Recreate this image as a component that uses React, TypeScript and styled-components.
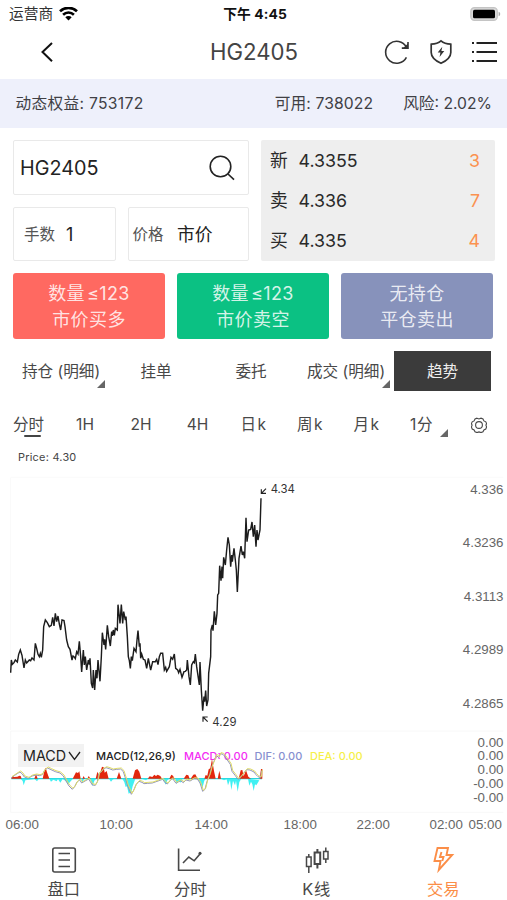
import React from "react";
import styled, { createGlobalStyle } from "styled-components";

const GlobalStyle = createGlobalStyle`
  * { box-sizing: border-box; }
  body { margin: 0; background: #fff; }
`;

const Screen = styled.div`
  width: 507px;
  height: 900px;
  overflow: hidden;
  display: flex;
  flex-direction: column;
  background: #fff;
  color: #444;
  font-family: Inter, "Noto Sans CJK SC", sans-serif;
  font-size: 15px;
  line-height: 24px;
  white-space: nowrap;

  > * { flex-shrink: 0; }
`;

const StatusBar = styled.div`
  height: 27px;
  display: grid;
  grid-template-columns: 1fr auto 1fr;
  align-items: center;
  padding: 0 6px 0 9px;
  color: #111;
`;
const Carrier = styled.div`
  display: flex;
  align-items: center;
  gap: 6px;
  font-size: 14.7px;
  color: #333;
`;
const Clock = styled.div`
  font-size: 13.8px;
  font-weight: 700;
  letter-spacing: 0.1px;
`;
const BatterySlot = styled.div`
  justify-self: end;
  display: flex;
`;

const NavBar = styled.header`
  height: 52px;
  display: grid;
  grid-template-columns: 132px 1fr 132px;
  align-items: center;
  padding-bottom: 2px;
`;
const BackSlot = styled.div`
  padding-left: 38px;
  display: flex;
`;
const Title = styled.h1`
  margin: 0;
  padding-left: 1px;
  font-size: 22.2px;
  font-weight: 400;
  text-align: center;
  color: #444;
`;
const NavActions = styled.div`
  display: flex;
  align-items: center;
  gap: 18.5px;
  padding-left: 9px;
`;

const AccountBar = styled.div`
  height: 49px;
  display: flex;
  align-items: center;
  padding: 1px 15px 0 15.5px;
  background: #eef0fb;
  color: #404045;
  font-size: 15.7px;
`;
const Stat = styled.span<{ $push?: boolean; $gap?: number; $track?: number }>`
  margin-left: ${(p) => (p.$push ? "auto" : `${p.$gap ?? 0}px`)};
  letter-spacing: ${(p) => p.$track ?? 0}px;
`;

const OrderForm = styled.section`
  display: grid;
  grid-template-columns: 103px 121px 234px;
  grid-template-rows: 55px 54px;
  gap: 12px;
  padding: 12px 12px 0 13px;
`;
const Field = styled.div<{ $wide?: boolean; $inset: number }>`
  grid-column: ${(p) => (p.$wide ? "1 / 3" : "auto")};
  display: flex;
  align-items: center;
  margin-right: ${(p) => (p.$wide ? 0.5 : 0)}px;
  padding: ${(p) => (p.$wide ? 0 : 1)}px 13px 0 ${(p) => p.$inset}px;
  border: 1px solid #e9e9e9;
  border-radius: 2px;
`;
const FieldLabel = styled.span<{ $gap: number }>`
  width: ${(p) => p.$gap}px;
  font-size: 15.5px;
  color: #555;
`;
const FieldValue = styled.span<{ $size: number }>`
  flex: 1;
  font-size: ${(p) => p.$size}px;
  color: #222;
`;
const Quotes = styled.div`
  grid-column: 3;
  grid-row: 1 / 3;
  display: grid;
  grid-template-rows: repeat(3, 40.3px);
  background: #eee;
  border-radius: 2px;
  padding: 0.5px 15px 0 9px;
`;
const QuoteRow = styled.div`
  display: grid;
  grid-template-columns: 28.5px 1fr auto;
  align-items: center;
  font-size: 17.8px;
  color: #2a2a2a;
`;
const Lots = styled.span`
  color: #fb9250;
`;

const OrderButtons = styled.div`
  display: grid;
  grid-template-columns: 152px 152px 152px;
  gap: 12px;
  padding: 12px 15px 0 13px;
`;
const OrderButton = styled.button<{ $bg: string }>`
  height: 66px;
  border: 0;
  border-radius: 3px;
  padding: 2px 0 0;
  background: ${(p) => p.$bg};
  color: rgba(255, 255, 255, 0.84);
  font: 400 18px/26px Inter, "Noto Sans CJK SC", sans-serif;
  letter-spacing: 0.4px;
  display: flex;
  flex-direction: column;
  align-items: center;
  justify-content: center;
`;
const Condition = styled.span`
  display: flex;
  gap: 2px;
`;

const Tabs = styled.nav`
  height: 40px;
  margin-top: 12px;
  display: grid;
  grid-template-columns: 117px 78px 112px 87px 97px;
  align-items: center;
  color: #484848;
  font-size: 15.6px;
`;
const Tab = styled.div<{ $active?: boolean; $start?: number }>`
  position: relative;
  height: 40px;
  display: flex;
  align-items: center;
  justify-content: ${(p) => (p.$start === undefined ? "center" : "flex-start")};
  padding-top: 2px;
  padding-left: ${(p) => p.$start ?? 0}px;
  background: ${(p) => (p.$active ? "#3b3b3b" : "transparent")};
  color: ${(p) => (p.$active ? "#eee" : "inherit")};
`;
const Corner = styled.i<{ $right: number; $bottom: number }>`
  position: absolute;
  right: ${(p) => p.$right}px;
  bottom: ${(p) => p.$bottom}px;
  border-left: 8px solid transparent;
  border-bottom: 8px solid #666;
`;

const Periods = styled.nav`
  height: 57px;
  display: grid;
  grid-template-columns: 57px 56px 56px 57px 56px 57px 56px 57px 55px;
  padding-top: 4px;
  color: #484848;
  font-size: 15.5px;
`;
const Period = styled.div<{ $active?: boolean; $shift?: number; $track?: number }>`
  position: relative;
  height: 57px;
  display: flex;
  align-items: center;
  justify-content: center;
  padding-top: 2px;
  padding-right: ${(p) => p.$shift ?? 0}px;
  letter-spacing: ${(p) => p.$track ?? 0}px;

  &::after {
    content: ${(p) => (p.$active ? '""' : "none")};
    position: absolute;
    left: 24px;
    bottom: 15px;
    width: 17px;
    height: 2.5px;
    border-radius: 2px;
    background: #444;
  }
`;

const PriceLine = styled.div`
  height: 22px;
  padding: 0 0 0 18px;
  font-size: 10.9px;
  line-height: 18px;
  letter-spacing: 0.25px;
  color: #444;
`;

const Layered = styled.section<{ $h: number }>`
  height: ${(p) => p.$h}px;
  display: grid;
  grid-template-columns: 507px;
  grid-template-rows: ${(p) => p.$h}px;
  font-family: "Liberation Sans", Arial, sans-serif;

  > * { grid-area: 1 / 1; }
`;
const PriceScale = styled.div`
  justify-self: end;
  display: flex;
  flex-direction: column;
  padding: 9.5px 3.5px 0 0;
  text-align: right;
  font-size: 13.3px;
  line-height: 20px;
  color: #666;
  gap: 33.5px;
`;
const MacdScale = styled.div`
  justify-self: end;
  padding: 5.5px 3.5px 0 0;
  text-align: right;
  font-size: 13.3px;
  line-height: 13.75px;
  color: #666;
`;
const MacdLegend = styled.div`
  align-self: start;
  display: flex;
  align-items: center;
  padding: 14px 0 0 18px;
  font: 500 11px/21px Inter, sans-serif;
`;
const Indicator = styled.div`
  width: 66px;
  height: 23px;
  margin-right: 12px;
  padding-left: 5px;
  display: flex;
  align-items: center;
  gap: 2px;
  background: #f2f2f2;
  color: #222;
  font-size: 14.3px;
  font-weight: 400;
`;
const LegendItem = styled.span<{ $color: string; $w: number }>`
  width: ${(p) => p.$w}px;
  padding-top: 2px;
  color: ${(p) => p.$color};
`;
const TimeAxis = styled.div`
  height: 24px;
  display: grid;
  grid-template-columns: 94px 95px 89px 73px 73px 39px 40px;
  padding-left: 5.5px;
  padding-bottom: 1px;
  align-items: center;
  font: 13.3px "Liberation Sans", Arial, sans-serif;
  color: #666;
`;

const BottomNav = styled.nav`
  height: 63px;
  display: grid;
  grid-template-columns: repeat(4, 126.5px);
`;
const NavItem = styled.div<{ $active?: boolean; $track?: number }>`
  display: flex;
  flex-direction: column;
  align-items: center;
  padding-top: 9px;
  padding-left: 1px;
  gap: 3px;
  font-size: 16.3px;
  line-height: 24px;
  letter-spacing: ${(p) => p.$track ?? 0}px;
  color: ${(p) => (p.$active ? "#fb8e48" : "#484848")};
`;

const PRICE_PATH =
  "32,608 34,570 37,583 42,578 46,570 52,576 56,553 61,540 66,556 72,594 76,570 80,579 88,570 92,572 96,564 102,570 106,520 110,535 114,553 118,560 121,550 124,562 128,540 131,470 136,450 142,458 148,470 154,466 158,442 162,468 166,430 170,455 174,438 178,462 182,480 186,450 192,452 195,470 200,510 205,530 210,538 216,570 219,558 222,560 226,566 230,545 234,552 238,514 242,560 245,606 250,540 253,585 256,560 260,600 265,570 268,584 270,565 274,640 278,654 280,600 284,660 288,600 291,625 294,570 300,634 304,560 307,488 312,525 314,508 317,538 322,466 326,500 331,528 335,485 337,498 340,480 343,496 346,475 352,480 354,404 360,460 364,404 368,460 371,425 376,450 378,440 382,500 385,560 388,572 391,595 394,560 397,572 402,535 408,545 411,510 414,482 418,530 420,520 422,565 425,552 430,568 435,570 440,595 445,565 448,580 452,600 458,575 466,575 470,568 474,584 478,560 482,550 488,550 491,580 493,600 497,592 500,604 508,590 513,562 518,568 523,552 527,595 533,600 536,608 540,598 546,622 552,605 556,604 560,600 562,570 567,620 571,645 575,585 580,575 583,578 586,552 590,590 598,645 600,576 604,660 608,722 612,680 614,695 617,662 620,708 624,690 626,610 632,560 633,480 637,465 639,482 643,424 647,465 651,430 653,375 656,370 659,287 663,332 666,290 668,325 671,262 676,285 680,240 684,202 688,225 692,290 695,255 697,275 702,235 706,270 709,300 712,366 717,265 723,228 727,255 730,245 734,265 738,143 741,215 746,180 752,178 756,156 760,200 764,165 768,230 771,180 774,210 780,180 783,85";

const MACD_UP = [
  "34,131 37,122 42,126 52,125 58,122 62,123 65,131",
  "103,131 108,117 113,131",
  "128,131 133,108 137,98 141,112 148,131",
  "218,131 228,112 234,114 238,109 242,131",
  "247,131 251,123 255,131 262,131 266,123 272,131",
  "287,131 292,110 297,120 301,112 306,95 311,97 314,113 320,108 326,131",
  "350,131 357,111 364,131",
  "398,131 405,106 412,102 418,110 424,131",
  "443,131 449,124 457,126 463,119 468,123 473,119 481,123 486,131",
  "508,131 514,119 519,122 524,131",
  "551,131 559,119 565,121 569,131",
  "572,131 580,119 586,118 593,131",
  "613,131 617,120 622,122 626,103 631,100 636,72 642,108 647,131",
  "653,131 658,107 663,131",
  "716,131 722,106 727,105 731,124 738,106 745,125 753,131",
  "779,131 783,102 787,102 787,131",
];
const MACD_DOWN = [
  "62,131 68,138 71,151 76,136 104,132 111,139 116,132",
  "148,131 153,140 160,134 170,139 174,132 181,143 188,132 197,138 205,147 212,139 219,131",
  "244,131 248,145 252,131 270,131 278,153 283,137 289,131",
  "327,131 333,140 339,133 348,131",
  "367,131 373,142 377,156 381,154 386,176 394,171 398,154 406,131",
  "424,131 438,136 444,131",
  "489,131 497,149 502,136 508,131",
  "526,131 530,146 536,137 541,143 548,131",
  "594,131 600,144 607,160 613,137 617,131",
  "663,131 672,136 680,133 684,151 690,135 694,165 699,137 705,151 708,137 713,170 718,141 724,131",
  "744,131 748,152 753,140 757,148 761,168 765,148 769,151 778,136",
];
const SIGNAL =
  "34,128 44,121 53,115 60,111 67,117 73,126 85,130 96,123 108,120 118,122 127,119 134,105 143,99 153,104 166,110 180,114 190,123 198,138 207,153 217,163 224,155 231,141 239,135 245,144 255,138 266,132 277,150 286,151 292,140 297,115 303,112 308,104 318,98 328,101 338,105 350,103 362,102 370,110 377,132 383,153 394,178 401,166 408,149 417,139 426,142 432,146 443,145 457,144 474,138 488,133 495,143 502,147 511,136 518,131 528,145 541,137 550,143 558,135 570,138 582,131 592,132 600,144 608,169 615,163 621,139 629,119 635,96 642,79 649,61 656,68 661,56 669,58 676,66 684,78 691,88 696,109 706,122 714,133 722,127 730,116 740,104 750,105 762,111 768,119 774,125 782,128 785,107";

const StrokeIcon = styled.svg`
  display: block;
  flex: none;
  fill: none;
  stroke: currentColor;
`;
const Plot = styled.svg`
  display: block;
`;

const PERIODS = [
  { label: "1H", track: 0 },
  { label: "2H", track: 0 },
  { label: "4H", track: 0 },
  { label: "日k", track: 1.6 },
  { label: "周k", track: 1.6 },
  { label: "月k", track: 1.6 },
];

export default function App() {
  return (
    <>
      <GlobalStyle />
      <Screen>
        <StatusBar>
          <Carrier>
            运营商
            <StrokeIcon width="19" height="14" viewBox="0 0 19 14" strokeWidth="2.6" color="#000">
              <path d="M1 4.300a12.200 12.200 0 0 1 17 0M4.100 7.700a7.700 7.700 0 0 1 10.800 0" />
              <path d="M9.500 13.400 6.300 10.200a4.600 4.600 0 0 1 6.400 0z" fill="currentColor" stroke="none" />
            </StrokeIcon>
          </Carrier>
          <Clock>下午 4:45</Clock>
          <BatterySlot>
            <svg width="31" height="14" viewBox="0 0 31 14">
              <rect x="0.8" y="0.7" width="26.5" height="12.6" rx="3.6" fill="#d8d8d8" stroke="#c4c4c4" strokeWidth="1.2" />
              <rect x="3" y="2.7" width="22" height="8.6" rx="1.6" fill="#000" />
              <path d="M28.6 4.8a2.3 2.3 0 0 1 0 4.4z" fill="#aaa" />
            </svg>
          </BatterySlot>
        </StatusBar>

        <NavBar>
          <BackSlot>
            <StrokeIcon width="18" height="22" viewBox="0 0 18 22" strokeWidth="2" color="#111">
              <path d="M14 2 4.500 11 14 20.200" />
            </StrokeIcon>
          </BackSlot>
          <Title>HG2405</Title>
          <NavActions>
            <StrokeIcon width="26" height="26" viewBox="0 0 26 26" strokeWidth="1.600" color="#333">
              <path d="M22.300 8A11 11 0 1 0 22.400 18.300" />
              <path d="M24 3v6.100h-6.200" />
              <path d="M24 4.500v4.600h-4.700z" fill="currentColor" stroke="none" />
            </StrokeIcon>
            <StrokeIcon width="24" height="26" viewBox="0 0 24 26" strokeWidth="1.700" color="#333">
              <path d="M12 1.800c3 2.600 6 3.200 9.800 3.400v8.200c0 5-4.600 8.400-9.800 10.800-5.200-2.400-9.800-5.800-9.800-10.800V5.200C6 5 9 4.400 12 1.800z" />
              <path d="M13.300 7.800 8.700 13.500h2.700L10.600 18l4.700-6h-2.900z" fill="currentColor" stroke="none" />
            </StrokeIcon>
            <StrokeIcon width="26" height="24" viewBox="0 0 26 24" strokeWidth="1.800" color="#222">
              <path d="M5.500 3h20.500M5.500 12h20.500M5.500 21h20.500M1 3h2M1 12h2M1 21h2" />
            </StrokeIcon>
          </NavActions>
        </NavBar>

        <AccountBar>
          <Stat $track={0.3}>动态权益: 753172</Stat>
          <Stat $push $track={0.1}>可用: 738022</Stat>
          <Stat $gap={30}>风险: 2.02%</Stat>
        </AccountBar>

        <OrderForm>
          <Field $wide $inset={6}>
            <FieldValue $size={19.8}>HG2405</FieldValue>
            <StrokeIcon width="26" height="26" viewBox="0 0 26 26" strokeWidth="1.600" color="#222">
              <circle cx="11.500" cy="11.500" r="10.300" />
              <path d="m19 19 6 5.700" />
            </StrokeIcon>
          </Field>
          <Field $inset={10}>
            <FieldLabel $gap={42}>手数</FieldLabel>
            <FieldValue $size={18}>1</FieldValue>
          </Field>
          <Field $inset={3.5}>
            <FieldLabel $gap={44.5}>价格</FieldLabel>
            <FieldValue $size={17.8}>市价</FieldValue>
          </Field>
          <Quotes>
            <QuoteRow><span>新</span><span>4.3355</span><Lots>3</Lots></QuoteRow>
            <QuoteRow><span>卖</span><span>4.336</span><Lots>7</Lots></QuoteRow>
            <QuoteRow><span>买</span><span>4.335</span><Lots>4</Lots></QuoteRow>
          </Quotes>
        </OrderForm>

        <OrderButtons>
          <OrderButton $bg="#ff6961">
            <Condition><span>数量</span><span>≤123</span></Condition>
            <span>市价买多</span>
          </OrderButton>
          <OrderButton $bg="#0bc183">
            <Condition><span>数量</span><span>≤123</span></Condition>
            <span>市价卖空</span>
          </OrderButton>
          <OrderButton $bg="#8792bb"><span>无持仓</span><span>平仓卖出</span></OrderButton>
        </OrderButtons>

        <Tabs>
          <Tab $start={22}>持仓 (明细)<Corner $right={12} $bottom={3} /></Tab>
          <Tab>挂单</Tab>
          <Tab>委托</Tab>
          <Tab $start={0}>成交 (明细)<Corner $right={4} $bottom={3} /></Tab>
          <Tab $active>趋势</Tab>
        </Tabs>

        <Periods>
          <Period $active>分时</Period>
          {PERIODS.map((p) => <Period key={p.label} $track={p.track}>{p.label}</Period>)}
          <Period $shift={4} $track={0.6}>1分<Corner $right={4} $bottom={15} /></Period>
          <Period $shift={2}>
            <StrokeIcon width="16" height="16" viewBox="0 0 16 16" strokeWidth="1.100">
              <path d="M6 1.200 8 1.900l2-.7 2 .8.9 1.900 1.900.9.800 2-.7 1.200.7 2-.8 2-1.900.9-.9 1.900-2 .8-2-.7-2 .7-2-.8-.9-1.900-1.900-.9-.8-2 .7-2-.7-1.200.8-2 1.900-.9.9-1.900z" />
              <circle cx="8" cy="8" r="3.400" />
            </StrokeIcon>
          </Period>
        </Periods>

        <PriceLine>Price: 4.30</PriceLine>

        <Layered $h={260}>
          <Plot width="507" height="260" viewBox="0 0 1521 780">
            <path d="M32 22H1510M32 22V780" stroke="#fafafa" strokeWidth="3" fill="none" />
            <polyline points={PRICE_PATH} fill="none" stroke="#1c1c1c" strokeWidth="4.3" />
            <path d="M798 56 784 70M784 58V70H798M623 755 609 741M609 755V741H623" stroke="#222" strokeWidth="3.5" fill="none" />
            <g fontFamily="Inter, sans-serif" fontSize="34" fill="#333">
              <text x="812" y="69">4.34</text>
              <text x="637" y="768">4.29</text>
            </g>
          </Plot>
          <PriceScale>
            <span>4.336</span><span>4.3236</span><span>4.3113</span><span>4.2989</span><span>4.2865</span>
          </PriceScale>
        </Layered>

        <Layered $h={83}>
          <MacdLegend>
            <Indicator>
              MACD
              <StrokeIcon width="13" height="10" viewBox="0 0 13 10" strokeWidth="1.300">
                <path d="m1 1 5.500 7.500L12 1" />
              </StrokeIcon>
            </Indicator>
            <LegendItem $color="#222" $w={88}>MACD(12,26,9)</LegendItem>
            <LegendItem $color="#f32df3" $w={70.5}>MACD: 0.00</LegendItem>
            <LegendItem $color="#8790d0" $w={55.5}>DIF: 0.00</LegendItem>
            <LegendItem $color="#f6f04a" $w={60}>DEA: 0.00</LegendItem>
          </MacdLegend>
          <Plot width="507" height="83" viewBox="0 -15 1521 249">
            <path d="M32 -12H1510M32 -12V232H1510" stroke="#f8f8f8" strokeWidth="3" fill="none" />
            <path d="M34 131H786" stroke="#25d5dc" strokeWidth="4" />
            {MACD_DOWN.map((p) => <polygon key={p} points={p} fill="#3ff0f2" />)}
            {MACD_UP.map((p) => <polygon key={p} points={p} fill="#e3260c" />)}
            <polyline points={SIGNAL} fill="none" stroke="#9294b8" strokeWidth="3" />
            <polyline points={SIGNAL} fill="none" stroke="#dfdc67" strokeWidth="3" transform="translate(2 -3)" />
          </Plot>
          <MacdScale>
            0.00<br />0.00<br />0.00<br />-0.00<br />-0.00
          </MacdScale>
        </Layered>

        <TimeAxis>
          <span>06:00</span><span>10:00</span><span>14:00</span><span>18:00</span><span>22:00</span><span>02:00</span><span>05:00</span>
        </TimeAxis>

        <BottomNav>
          <NavItem>
            <StrokeIcon width="28" height="28" viewBox="0 0 28 28" strokeWidth="1.600">
              <rect x="2.800" y="2" width="22.500" height="24" rx="2" />
              <path d="M8.500 7.500h11.500M8.500 14h11.500M8.500 20.500h11.500" />
            </StrokeIcon>
            盘口
          </NavItem>
          <NavItem>
            <StrokeIcon width="28" height="28" viewBox="0 0 28 28" strokeWidth="1.600">
              <path d="M2.600 2.500v21.800H24M7 17l5.800-6 5.400 3.800 6.400-7.500" />
              <circle cx="24" cy="7.300" r="1.500" fill="currentColor" stroke="none" />
            </StrokeIcon>
            分时
          </NavItem>
          <NavItem $track={0.8}>
            <StrokeIcon width="28" height="28" viewBox="0 0 28 28" strokeWidth="1.500">
              <path d="M3.500 11h4.600v9.500H3.500zM5.800 8v3M5.800 20.500V27M20.600 5.500H25V13h-4.400zM22.800 1.500v4M22.800 13v4" />
              <path d="M11.600 6.500h5.600V18h-5.600zM14.400 3v3.500M14.400 18v4.500" strokeWidth="2" />
            </StrokeIcon>
            K线
          </NavItem>
          <NavItem $active>
            <StrokeIcon width="28" height="28" viewBox="0 0 28 28" strokeWidth="1.900">
              <path d="M8.500 2H19l-1.500 7h5.700L9.800 24l1.800-9H5.500z" />
              <path d="m12.500 6-1.500 5h3.500l-1.200 4" />
            </StrokeIcon>
            交易
          </NavItem>
        </BottomNav>
      </Screen>
    </>
  );
}
